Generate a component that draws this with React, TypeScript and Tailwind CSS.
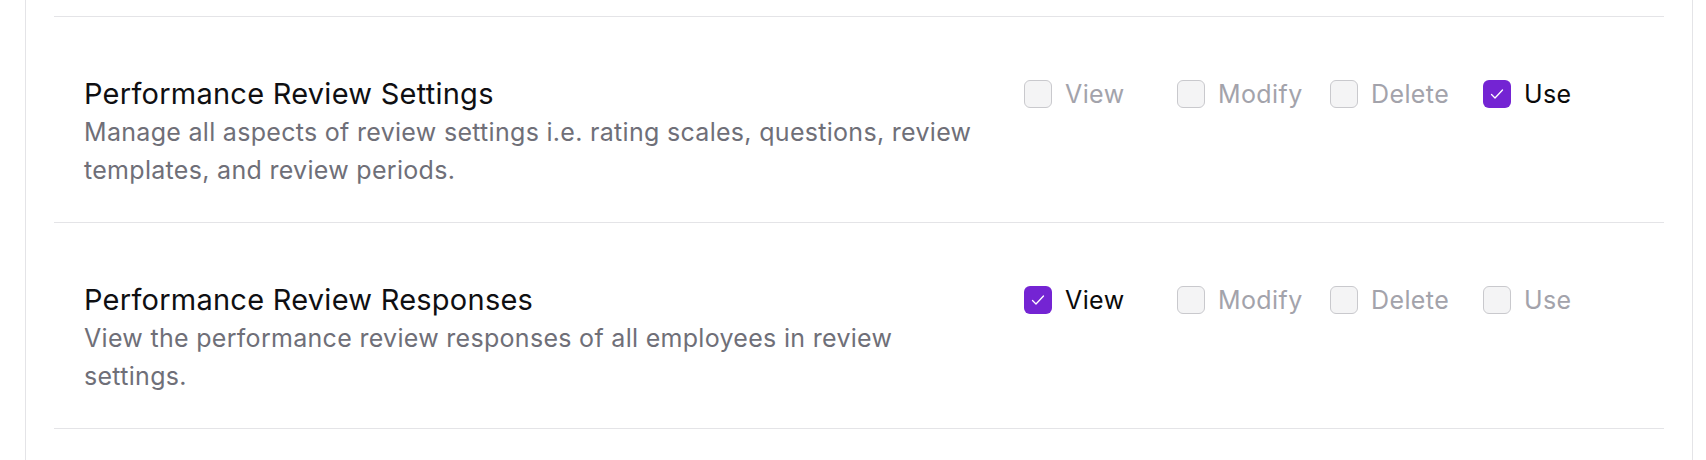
import React from "react";

type Perm = { label: string; checked: boolean };
type Row = { title: string; desc: string; perms: Perm[] };

const rows: Row[] = [
  {
    title: "Performance Review Settings",
    desc: "Manage all aspects of review settings i.e. rating scales, questions, review templates, and review periods.",
    perms: [
      { label: "View", checked: false },
      { label: "Modify", checked: false },
      { label: "Delete", checked: false },
      { label: "Use", checked: true },
    ],
  },
  {
    title: "Performance Review Responses",
    desc: "View the performance review responses of all employees in review settings.",
    perms: [
      { label: "View", checked: true },
      { label: "Modify", checked: false },
      { label: "Delete", checked: false },
      { label: "Use", checked: false },
    ],
  },
];

function Box({ checked }: { checked: boolean }) {
  if (checked) {
    return (
      <span className="flex h-[28px] w-[28px] shrink-0 items-center justify-center rounded-[6px] bg-[#7424d3]">
        <svg width="28" height="28" viewBox="0 0 28 28" fill="none">
          <path d="M8.5 14.5 L12 18 L19.5 10" stroke="white" strokeWidth="1.3" strokeLinecap="round" strokeLinejoin="round" />
        </svg>
      </span>
    );
  }
  return <span className="block h-[28px] w-[28px] shrink-0 rounded-[6px] border border-[#c9c9cd] bg-[#f4f4f5]" />;
}

export default function App() {
  return (
    <div className="min-h-screen bg-white pl-[25px] pr-[13px]" style={{ fontFamily: "Inter, 'Noto Sans', sans-serif" }}>
      <div className="min-h-[460px] border-x border-[#e4e4e7] px-[28px]">
        <div className="h-[17px] border-b border-[#e4e4e7]" />
        {rows.map((r) => (
          <div key={r.title} className="flex items-start border-b border-[#e4e4e7] pb-[33px] pl-[30px] pr-[28px] pt-[57px]">
            <div className="min-w-0 flex-1 pr-[40px]">
              <div className="text-[29px] leading-[40px] tracking-[0.25px] text-[#0f0f12]">{r.title}</div>
              <div className="-mt-[1px] text-[25px] leading-[38px] tracking-[0.3px] text-[#6f6f78]">{r.desc}</div>
            </div>
            <div className="mt-[6px] grid w-[612px] grid-cols-4">
              {r.perms.map((p) => (
                <div key={p.label} className="flex items-center gap-[13px]">
                  <Box checked={p.checked} />
                  <span className={"text-[25px] leading-[28px] tracking-[0.4px] " + (p.checked ? "text-[#0a0a0a]" : "text-[#a3a3ab]")}>{p.label}</span>
                </div>
              ))}
            </div>
          </div>
        ))}
      </div>
    </div>
  );
}
